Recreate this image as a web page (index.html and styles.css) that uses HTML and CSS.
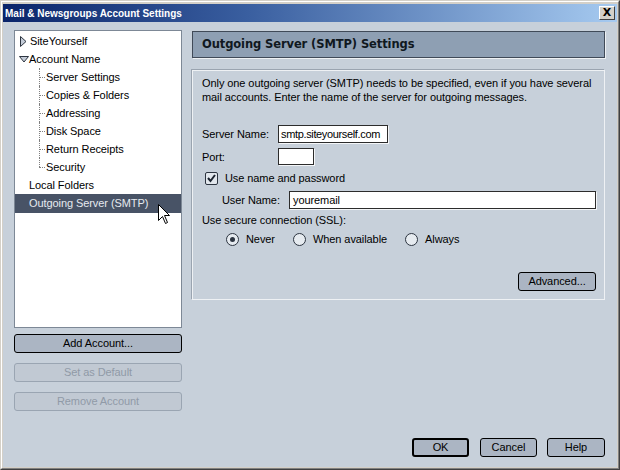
FILE: index.html
```html
<!DOCTYPE html>
<html>
<head>
<meta charset="utf-8">
<link rel="stylesheet" href="styles.css">
</head>
<body>
<div class="window">
  <div class="frame">
    <div class="titlebar">
      <span class="title">Mail &amp; Newsgroups Account Settings</span>
      <span class="close">X</span>
    </div>
    <div class="main">
      <div class="top">
        <div class="left">
          <div class="tree">
            <div class="row l0"><svg class="tri" width="7" height="11" viewBox="0 0 7 11"><path d="M0.5 0.5 L6 5.5 L0.5 10.5 Z" fill="#c4ccd8" stroke="#2c3440" stroke-width="1"/></svg>SiteYourself</div>
            <div class="row l0"><svg class="tri-d" width="10" height="7" viewBox="0 0 10 7"><path d="M0.5 0.5 L9.5 0.5 L5 6 Z" fill="#c4ccd8" stroke="#2c3440" stroke-width="1"/></svg>Account Name</div>
            <div class="row l1">Server Settings</div>
            <div class="row l1">Copies &amp; Folders</div>
            <div class="row l1">Addressing</div>
            <div class="row l1">Disk Space</div>
            <div class="row l1">Return Receipts</div>
            <div class="row l1 last">Security</div>
            <div class="row l0 plain">Local Folders</div>
            <div class="row l0 plain selected">Outgoing Server (SMTP)
              <svg class="cursor" width="13" height="21" viewBox="0 0 13 21"><path d="M0.5 0.5 L0.5 16.5 L4.5 12.5 L7.5 19.5 L9.5 18.5 L6.5 11.5 L11.5 11.5 Z" fill="#fff" stroke="#000" stroke-width="1"/></svg>
            </div>
          </div>
          <div class="btn wide">Add Account...</div>
          <div class="btn wide disabled">Set as Default</div>
          <div class="btn wide disabled">Remove Account</div>
        </div>
        <div class="right">
          <div class="header">Outgoing Server (SMTP) Settings</div>
          <div class="panel">
            <p class="intro">Only one outgoing server (SMTP) needs to be specified, even if you have several mail accounts. Enter the name of the server for outgoing messages.</p>
            <div class="field server">
              <span class="label">Server Name:</span>
              <span class="input inp-server">smtp.siteyourself.com</span>
            </div>
            <div class="field port">
              <span class="label">Port:</span>
              <span class="input inp-port"></span>
            </div>
            <div class="check-row">
              <span class="checkbox"><svg width="11" height="11" viewBox="0 0 11 11"><path d="M2 5 L4.5 8 L9 2" fill="none" stroke="#1c2430" stroke-width="2"/></svg></span>
              <span>Use name and password</span>
            </div>
            <div class="field user">
              <span class="label ulabel">User Name:</span>
              <span class="input inp-user">youremail</span>
            </div>
            <div class="ssl-label">Use secure connection (SSL):</div>
            <div class="radios">
              <span class="radio-item"><span class="radio on"></span>Never</span>
              <span class="radio-item"><span class="radio"></span>When available</span>
              <span class="radio-item"><span class="radio"></span>Always</span>
            </div>
            <div class="adv-row"><div class="btn adv">Advanced...</div></div>
          </div>
        </div>
      </div>
      <div class="footer">
        <div class="btn foot default">OK</div>
        <div class="btn foot">Cancel</div>
        <div class="btn foot help">Help</div>
      </div>
    </div>
  </div>
</div>
</body>
</html>
```
FILE: styles.css
```css
* { box-sizing: border-box; }
html, body { margin: 0; padding: 0; background: #c7d0da; }
body { font-family: "Liberation Sans", Arial, sans-serif; font-size: 11px; color: #000; letter-spacing: -0.08px; }

.window {
  width: 620px; height: 470px;
  border: 1px solid; border-color: #d4d0c8 #404040 #404040 #d4d0c8;
  background: #d4d0c8;
}
.frame {
  height: 100%;
  border: 1px solid; border-color: #ffffff #808080 #808080 #ffffff;
  padding: 1px;
  display: flex; flex-direction: column;
}
.titlebar {
  height: 18px;
  background: linear-gradient(90deg, #0a246a 0%, #3a5fa0 40%, #a6caf0 100%);
  display: flex; align-items: center; justify-content: space-between;
  padding: 0 2px 0 2px;
  margin-top: 1px;
}
.title { color: #fff; font-weight: bold; font-size: 10px; letter-spacing: 0; }
.close {
  width: 16px; height: 14px;
  background: #d4d0c8;
  border: 1px solid; border-color: #fff #404040 #404040 #fff;
  font-weight: bold; font-size: 11px; line-height: 12px; text-align: center;
  font-family: "DejaVu Sans", sans-serif;
}
.main {
  flex: 1;
  background: #c7d0da;
  padding: 8px 12px 9px 11px;
  display: flex; flex-direction: column;
}
.top { display: flex; gap: 10px; }
.left { width: 168px; display: flex; flex-direction: column; }
.tree {
  height: 298px;
  background: #fff;
  border: 1px solid #7d8896;
  padding-top: 1px;
}
.row { height: 18px; line-height: 18px; position: relative; white-space: nowrap; }
.l0 { padding-left: 5px; display: flex; align-items: center; }
.l0.plain { padding-left: 14px; }
.tri { margin-right: 3px; }
.tri-d { margin-right: 0; margin-left: -1px; }
.l1 { padding-left: 31px; }
.l1::before {
  content: ""; position: absolute; left: 24px; top: 9px; width: 6px;
  border-top: 1px dotted #808080;
}
.l1::after {
  content: ""; position: absolute; left: 24px; top: 0; height: 18px;
  border-left: 1px dotted #808080;
}
.l1.last::after { height: 9px; }
.selected { background: #485366; color: #e6eaef; height: 19px; line-height: 19px; }
.cursor { position: absolute; left: 143px; top: 10px; }

.btn {
  height: 19px; line-height: 17px; text-align: center;
  background: #abb5c3;
  border: 1px solid #000; border-radius: 3px;
}
.wide { margin-top: 6px; }
.wide.disabled { margin-top: 10px; border-color: #9aa5b2; color: #909aa7; background: #c1c9d3; }
.wide:first-of-type { margin-top: 0; }

.right { flex: 1; display: flex; flex-direction: column; padding-top: 1px; }
.header {
  height: 27px; line-height: 25px;
  background: #8e9fb3;
  border: 1px solid #404a58;
  box-shadow: 1px 1px 0 #eef1f4;
  padding-left: 9px;
  font-family: "DejaVu Sans", sans-serif; font-weight: bold; font-size: 11.5px;
  color: #101820; letter-spacing: -0.1px;
}
.panel {
  margin-top: 12px; height: 230px;
  border: 1px solid #eef1f4;
  box-shadow: -1px -1px 0 #9aa4b0;
  padding: 5px 8px 0 9px;
  display: flex; flex-direction: column;
}
.intro { margin: 0; line-height: 14px; }
.field { display: flex; align-items: center; }
.label { width: 76px; }
.input {
  background: #fff; border: 1px solid #2c2c2c;
  box-shadow: 1px 1px 0 #f4f6f8;
  height: 18px; line-height: 16px; padding-left: 3px; white-space: nowrap; overflow: hidden;
}
.server { margin-top: 21px; }
.inp-server { width: 110px; font-size: 11px; letter-spacing: -0.35px; padding-left: 2px; }
.port { margin-top: 5px; }
.inp-port { width: 36px; height: 17px; }
.check-row { display: flex; align-items: center; margin-top: 6px; height: 14px; padding-left: 3px; }
.checkbox {
  width: 13px; height: 13px; border: 1px solid #2c3440; border-radius: 2px;
  background: #e2e7ed; margin-right: 7px; display: flex; align-items: center; justify-content: center;
}
.user { margin-top: 6px; padding-left: 20px; }
.ulabel { width: 67px; }
.inp-user { width: 307px; }
.ssl-label { margin-top: 4px; line-height: 14px; }
.radios { display: flex; align-items: center; margin-top: 5px; padding-left: 24px; height: 14px; }
.radio-item { display: flex; align-items: center; margin-right: 18px; }
.radio-item:nth-child(2) { margin-right: 18px; }
.radio {
  width: 13px; height: 13px; border-radius: 50%;
  border: 1px solid #2c3440; background: #e6ebf0; margin-right: 7px;
  display: flex; align-items: center; justify-content: center;
}
.radio.on::after { content: ""; width: 5px; height: 5px; border-radius: 50%; background: #2c3440; }
.adv-row { display: flex; justify-content: flex-end; margin-top: 26px; }
.adv { width: 78px; }

.footer { margin-top: auto; display: flex; justify-content: flex-end; gap: 10px; padding-bottom: 1px; }
.foot { width: 57px; }
.help { width: 58px; }
.default { border-width: 2px; line-height: 15px; margin-right: 1px; }
```
